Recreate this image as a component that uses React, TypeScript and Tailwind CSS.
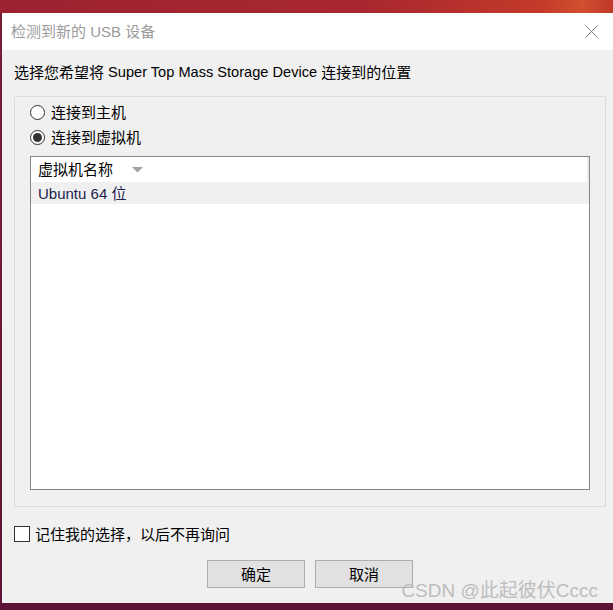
import React from "react";

const FONT = { fontFamily: '"Liberation Sans", "Noto Sans CJK SC", sans-serif' };

export default function App() {
  return (
    <div
      className="relative w-[613px] h-[610px] overflow-hidden bg-[linear-gradient(180deg,#7a1c34_0%,#5e1436_100%)]"
      style={FONT}
    >
      <div className="h-[13px] w-full bg-[linear-gradient(90deg,#9c2232_0%,#a8282f_60%,#c4392a_88%,#d0502e_95%,#c0382a_100%)]" />
      <div className="ml-[2px] w-[616px] h-[590px] bg-[#f0f0f0] flex flex-col">
        {/* title bar */}
        <div className="h-[37px] bg-white flex items-center justify-between pl-[9px] pr-[14px] shrink-0">
          <span className="text-[15px] text-[#9b9b9b] leading-none">检测到新的 USB 设备</span>
          <svg width="13" height="13" viewBox="0 0 13 13" className="mr-[6px]">
            <path d="M0.5 0.5 L12.5 12.5 M12.5 0.5 L0.5 12.5" stroke="#7a7a7a" strokeWidth="1" />
          </svg>
        </div>
        {/* instruction */}
        <div className="mt-[12px] pl-[12px] h-[20px] flex items-center text-[15px] text-black leading-none">
          选择您希望将<span className="text-[14.6px]">&nbsp;Super Top Mass Storage Device&nbsp;</span>连接到的位置
        </div>
        {/* group box */}
        <div className="mt-[14px] ml-[12px] w-[592px] h-[411px] border border-[#dcdcdc] pt-[3px] flex flex-col">
          <div className="h-[25px] flex items-center pl-[15px] gap-[6px]">
            <div className="w-[15px] h-[15px] rounded-full border border-[#333] bg-white" />
            <span className="text-[15px] text-black leading-none">连接到主机</span>
          </div>
          <div className="h-[25px] flex items-center pl-[15px] gap-[6px]">
            <div className="w-[15px] h-[15px] rounded-full border border-[#333] bg-white flex items-center justify-center">
              <div className="w-[9px] h-[9px] rounded-full bg-[#333]" />
            </div>
            <span className="text-[15px] text-black leading-none">连接到虚拟机</span>
          </div>
          {/* list */}
          <div className="mt-[6px] ml-[15px] w-[560px] h-[334px] border border-[#828790] bg-white flex flex-col">
            <div className="h-[25px] flex items-center bg-white shrink-0">
              <div className="flex-1 flex items-center pl-[7px]">
                <span className="text-[15px] text-black leading-none">虚拟机名称</span>
                <svg width="11" height="6" viewBox="0 0 11 6" className="ml-[19px] mt-[1px]">
                  <path d="M0 0 L11 0 L5.5 5.5 Z" fill="#a2a2a2" />
                </svg>
              </div>
              <div className="w-[2px] h-full bg-[#ececec]" />
            </div>
            <div className="h-[22px] flex items-center bg-[#f0f0f0] pl-[7px] shrink-0">
              <span className="text-[15px] text-[#1c1c4c] leading-none">Ubuntu 64 位</span>
            </div>
          </div>
        </div>
        {/* remember */}
        <div className="mt-[17px] h-[20px] flex items-center pl-[12px] gap-[5px]">
          <div className="w-[16px] h-[16px] border border-[#333] bg-white" />
          <span className="text-[15px] text-black leading-none">记住我的选择，以后不再询问</span>
        </div>
        {/* buttons */}
        <div className="mt-[16px] flex justify-center gap-[10px]">
          <button className="w-[98px] h-[28px] bg-[#e1e1e1] border border-[#adadad] text-[15px] text-black leading-none">
            确定
          </button>
          <button className="w-[98px] h-[28px] bg-[#e1e1e1] border border-[#adadad] text-[15px] text-black leading-none">
            取消
          </button>
        </div>
      </div>
      <div className="absolute right-[15px] bottom-[10px] text-[19px] leading-none text-[#bdbdbd] font-normal">
        CSDN @此起彼伏Cccc
      </div>
    </div>
  );
}
